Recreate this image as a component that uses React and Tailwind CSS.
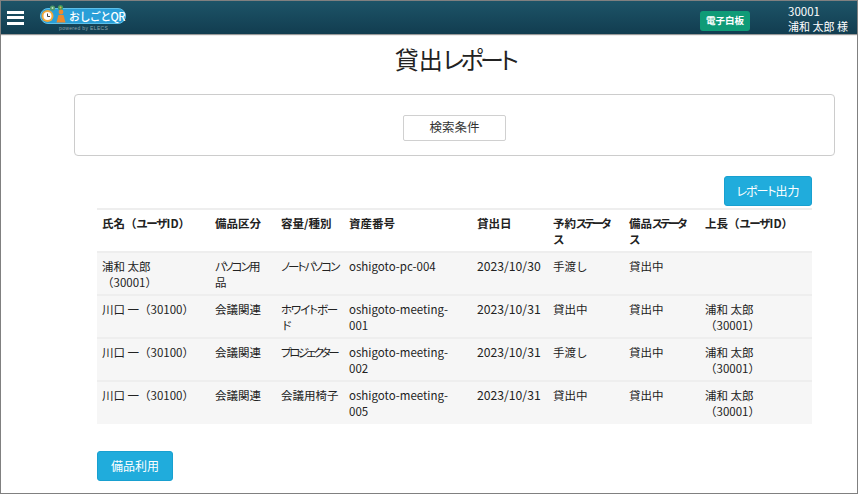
const font = { fontFamily: '"Noto Sans CJK JP", sans-serif' };
const K = ({ children }) => <span className="tracking-[-1.9px] [font-feature-settings:'palt']">{children}</span>;
const K3 = ({ children }) => <span className="tracking-[-2.5px] [font-feature-settings:'palt']">{children}</span>;
const K2 = ({ children }) => <span className="tracking-[-1.1px] [font-feature-settings:'palt']">{children}</span>;
const K4 = ({ children }) => <span className="tracking-[-2.6px] [font-feature-settings:'palt']">{children}</span>;
const cols = [113, 66, 68, 128, 76, 76, 76, 112];
const heads = [
  <>氏名（<K2>ユーザ</K2>ID）</>, '備品区分', '容量/種別', '資産番号', '貸出日',
  <>予約<K4>ステータ</K4><br />ス</>, <>備品<K4>ステータ</K4><br />ス</>, <>上長（<K2>ユーザ</K2>ID）</>,
];
const boss = <>浦和 太郎<br />（30001）</>;
const rows = [
  [<>浦和 太郎<br />（30001）</>, <><K>パソコン</K>用<br />品</>, <K>ノートパソコン</K>, 'oshigoto-pc-004', '2023/10/30', '手渡し', '貸出中', ''],
  ['川口 一（30100）', '会議関連', <><K2>ホワイトボー</K2><br />ド</>, <>oshigoto-meeting-<br />001</>, '2023/10/31', '貸出中', '貸出中', boss],
  ['川口 一（30100）', '会議関連', <K3>プロジェクター</K3>, <>oshigoto-meeting-<br />002</>, '2023/10/31', '手渡し', '貸出中', boss],
  ['川口 一（30100）', '会議関連', '会議用椅子', <>oshigoto-meeting-<br />005</>, '2023/10/31', '貸出中', '貸出中', boss],
];

function Logo() {
  return (
    <div className="relative w-[88px] h-[32px] shrink-0">
      <div className="absolute left-0 top-[6px] w-[86px] h-[16px] rounded-full bg-[#2a9fd8] border border-[#5cc0ea]" />
      <svg className="absolute left-0 top-0" width="32" height="24" viewBox="0 0 32 24">
        <circle cx="12.5" cy="6" r="2.6" fill="#4f9a6a" />
        <circle cx="12.5" cy="6" r="1" fill="#bfe0c8" />
        <circle cx="20.5" cy="5.5" r="2.6" fill="#3f9a5e" />
        <circle cx="20.5" cy="5.5" r="1" fill="#e9b04a" />
        <circle cx="7.5" cy="14" r="6" fill="#f2a93b" />
        <circle cx="7.5" cy="14" r="4" fill="#fff" />
        <path d="M7.5 11.5V14.5H10" stroke="#444" strokeWidth="1" fill="none" />
        <circle cx="21" cy="10" r="2.4" fill="#ee8a2c" />
        <path d="M16.5 20.5L18.5 13H23.5L25.5 20.5Z" fill="#ee8a2c" />
      </svg>
      <span className="absolute left-[29px] top-[6px] text-white text-[11px] tracking-[-0.6px] leading-[16px] font-medium whitespace-nowrap">おしごとQR</span>
      <span className="absolute left-[19px] top-[23px] text-[#8fa6ae] text-[5px] leading-[6px] tracking-[0.35px] whitespace-nowrap" style={{ fontFamily: '"Liberation Sans", sans-serif' }}>powered by ELECS</span>
    </div>
  );
}

export default function App() {
  return (
    <div className="w-[858px] h-[494px] border border-[#808080] bg-white text-[#222] overflow-hidden flex flex-col" style={font}>
      <header className="h-[33px] shrink-0 flex items-center bg-gradient-to-b from-[#1d5468] to-[#123d50] shadow-[0_1px_1px_rgba(0,0,0,0.4)]">
        <div className="ml-[6px] w-[17px] flex flex-col gap-[2.5px]">
          <div className="h-[3px] bg-white" />
          <div className="h-[3px] bg-white" />
          <div className="h-[3px] bg-white" />
        </div>
        <div className="ml-[16px]"><Logo /></div>
        <div className="ml-auto mr-[10px] flex items-center">
          <div className="w-[50px] h-[20px] mt-[6px] mr-[38px] rounded-[3px] bg-[#0f9b77] text-white text-[9.5px] font-bold flex items-center justify-center">電子白板</div>
          <div className="w-[59px] mt-[2px] text-white text-[11px] leading-[15px] whitespace-nowrap"><span className="text-[11.5px]">30001</span><br />浦和 太郎 様</div>
        </div>
      </header>
      <main className="flex-1 flex flex-col">
        <h1 className="mt-[8px] text-center text-[24px] leading-[34px] font-normal text-[#222] pl-[52px]">貸出<span className="tracking-[-3.5px] [font-feature-settings:'palt']">レポート</span></h1>
        <section className="ml-[73px] mt-[18px] w-[761px] h-[62px] border border-[#cccccc] rounded-[4px] flex items-center justify-center">
          <button className="w-[103px] h-[26px] mt-[5px] border border-[#d0d0d0] rounded-[2px] bg-white text-[12.5px] text-[#333]">検索条件</button>
        </section>
        <div className="ml-[96px] w-[715px] mt-[20px] flex justify-end">
          <button className="w-[88px] h-[30px] rounded-[3px] bg-[#20acdc] border border-[#18a0d0] text-white text-[12px]"><K2>レポート</K2>出力</button>
        </div>
        <table className="ml-[96px] mt-[2px] w-[715px] table-fixed border-collapse text-[11.5px] leading-[16px]">
          <colgroup>{cols.map((w, i) => <col key={i} style={{ width: w }} />)}</colgroup>
          <thead>
            <tr className="h-[43px] border-y-2 border-[#eeeeee]">
              {heads.map((h, i) => <th key={i} className="align-top text-left font-bold px-[5px] pt-[5px] whitespace-nowrap">{h}</th>)}
            </tr>
          </thead>
          <tbody>
            {rows.map((r, i) => (
              <tr key={i} className="h-[43px] border-b-2 last:border-b-0 border-[#eeeeee] bg-[#f6f6f6]">
                {r.map((c, j) => <td key={j} className={j === 4 ? "align-top px-[5px] pt-[5px] whitespace-nowrap text-[12.2px]" : "align-top px-[5px] pt-[5px] whitespace-nowrap"}>{c}</td>)}
              </tr>
            ))}
          </tbody>
        </table>
        <button className="ml-[96px] mt-[27px] w-[76px] h-[30px] rounded-[3px] bg-[#20acdc] border border-[#18a0d0] text-white text-[12px]">備品利用</button>
      </main>
    </div>
  );
}
